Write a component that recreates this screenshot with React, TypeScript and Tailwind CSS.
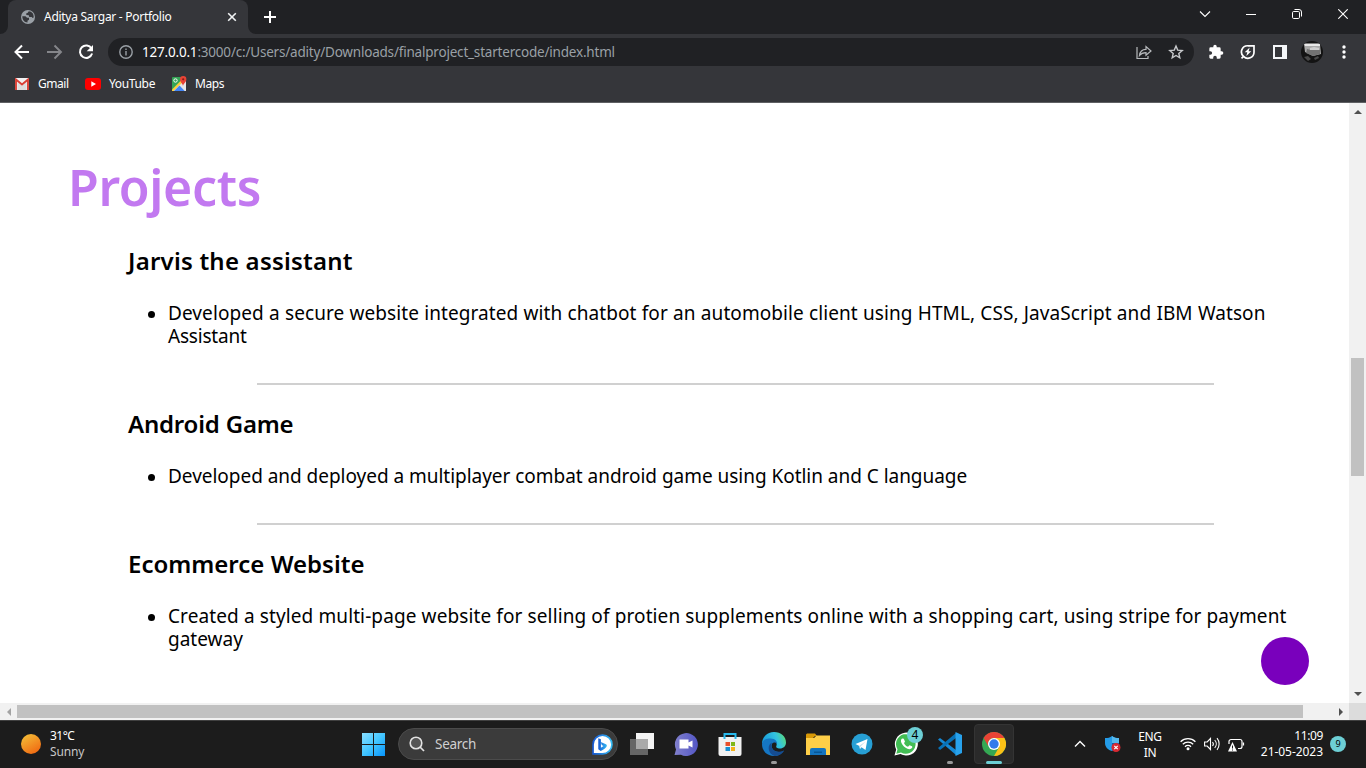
import type { ReactNode } from "react";

function Globe() {
  return (
    <svg width="14" height="14" viewBox="0 0 14 14">
      <circle cx="7" cy="7" r="7" fill="#9aa0a6" />
      <path d="M1.300 6.300 4.500 6.300 6 7.800H8v2l-1.500 1v1.800C3.500 12.400 1.300 10 1.300 6.300ZM7.800 1.300 6.500 3 5.300 3.300v1.700l2.500.3.500 1.600h2.500l.7 1.200 1.200-.6C12.900 4 11 1.500 7.800 1.300Z" fill="#35363a" />
    </svg>
  );
}

function GmailIcon() {
  return (
    <svg width="14" height="12" viewBox="0 0 14 12">
      <rect width="14" height="12" rx="1" fill="#f2f2f2" />
      <path d="M2.500 12V4L7 8l4.500-4v8z" fill="#dedede" />
      <path d="M1 12V1.500l6 5 6-5V12" fill="none" stroke="#d93f35" strokeWidth="1.900" />
    </svg>
  );
}

function MapsIcon() {
  return (
    <svg width="15" height="15" viewBox="0 0 15 15">
      <rect y="1" width="14" height="14" rx="1" fill="#35a456" />
      <path d="M0 15 13 2l1 1v12z" fill="#e7e7e7" />
      <path d="M0 13.500 12 1.500l1.500 2L1.500 15H0z" fill="#fbcf3b" />
      <path d="m7.500 9.500 5.200 5.500H2z" fill="#4285f4" />
      <circle cx="3.500" cy="4.500" r="1.700" fill="none" stroke="#fff" />
      <path d="M11 10C10.700 7.500 8 6.500 8 3.300a3.200 3.200 0 0 1 6.400 0C14.400 6.500 11.500 7.500 11 10Z" fill="#e94335" />
      <circle cx="11.200" cy="3.300" r="1.100" fill="#891c17" />
    </svg>
  );
}

function Chrome() {
  return (
    <div className="h-[103px] w-full bg-[#35363a] text-white font-['Noto_Sans',sans-serif]">
      <div className="flex h-[34px] bg-[#202124]">
        <div className="relative ml-2 flex h-[34px] w-60 items-center rounded-t-lg bg-[#35363a] pl-[13px] pr-[11px]">
          <svg className="absolute -left-2 bottom-0" width="8" height="8"><path d="M8 0v8H0a8 8 0 0 0 8-8Z" fill="#35363a" /></svg>
          <svg className="absolute -right-2 bottom-0" width="8" height="8"><path d="M0 0v8h8a8 8 0 0 1-8-8Z" fill="#35363a" /></svg>
          <Globe />
          <span className="ml-[9px] whitespace-nowrap text-[12px] tracking-[-0.280px]">Aditya Sargar - Portfolio</span>
          <svg className="ml-auto" width="10" height="10" viewBox="0 0 10 10"><path d="m1.200 1.200 7.600 7.600m0-7.600L1.200 8.800" stroke="#f1f3f4" strokeWidth="1.600" /></svg>
        </div>
        <div className="flex w-11 items-center justify-center">
          <svg width="12" height="12" viewBox="0 0 12 12"><path d="M6 0v12M0 6h12" stroke="#fff" strokeWidth="2" /></svg>
        </div>
        <div className="ml-auto flex h-[28px] items-center">
          <div className="flex w-[46px] justify-center"><svg width="12" height="12" viewBox="0 0 12 12"><path d="m1 3.500 5 5 5-5" fill="none" stroke="#fff" strokeWidth="1.100" /></svg></div>
          <div className="flex w-[46px] justify-center"><svg width="10" height="10"><path d="M0 5.500h10" stroke="#fff" /></svg></div>
          <div className="flex w-[46px] justify-center"><svg width="10" height="10" viewBox="0 0 10 10"><rect x=".5" y="2.500" width="7" height="7" rx="1.200" fill="none" stroke="#fff" /><path d="M2.500.500H7A2.500 2.500 0 0 1 9.500 3v4.500" fill="none" stroke="#fff" /></svg></div>
          <div className="flex w-[46px] justify-center"><svg width="10" height="10" viewBox="0 0 10 10"><path d="m.3.300 9.400 9.400m0-9.400L.3 9.700" stroke="#fff" strokeWidth="1.100" /></svg></div>
        </div>
      </div>
      <div className="flex h-9 items-center">
        <svg className="ml-[14px]" width="16" height="16" viewBox="0 0 16 16"><path d="M15 8H2M8 1.500 1.500 8 8 14.500" fill="none" stroke="#fff" strokeWidth="2" /></svg>
        <svg className="ml-[17px]" width="16" height="16" viewBox="0 0 16 16"><path d="M0 8h13M7.500 1.500 14 8l-6.500 6.500" fill="none" stroke="#85868a" strokeWidth="1.900" /></svg>
        <svg className="ml-[15px]" width="16" height="16" viewBox="0 0 16 16"><path d="M13.500 4.500A6.200 6.200 0 1 0 14.100 9.500" fill="none" stroke="#fff" strokeWidth="2" /><path d="M15 1v6.300H8.700z" fill="#fff" /></svg>
        <div className="ml-[14px] flex h-7 w-[1086px] items-center rounded-full bg-[#202124] pl-[11px] pr-[10px]">
          <svg width="14" height="14" viewBox="0 0 14 14"><circle cx="7" cy="7" r="6.200" fill="none" stroke="#9aa0a6" strokeWidth="1.400" /><path d="M7 6v4.500M7 3.500v1.500" stroke="#9aa0a6" strokeWidth="1.400" /></svg>
          <span className="ml-[9px] whitespace-nowrap pt-px text-[13.500px] tracking-[-0.200px] text-[#9aa0a6]"><span className="text-white">127.0.0.1</span>:3000/c:/Users/adity/Downloads/finalproject_startercode/index.html</span>
          <svg className="ml-auto mr-4" width="16" height="16" viewBox="0 0 16 16"><path d="M1 3v11.500h11V12M3.500 11.500C4 7 6.500 5.300 10 5.300V2.500L15 7l-5 4.300V8.600C7 8.600 5 9.500 3.500 11.500Z" fill="none" stroke="#b7babd" strokeWidth="1.200" /></svg>
          <svg width="16" height="16" viewBox="0 0 16 16"><path d="m8 2 1.700 4.100 4.500.4-3.400 2.900 1 4.400L8 11.500l-3.800 2.300 1-4.400-3.400-2.900 4.500-.4z" fill="none" stroke="#c8cacd" strokeWidth="1.400" /></svg>
        </div>
        <div className="ml-[6px] flex items-center">
          <div className="flex w-8 justify-center"><svg width="16" height="16" viewBox="0 0 24 24"><path fill="#fff" d="M20.500 11H19V7a2 2 0 0 0-2-2h-4V3.500a2.500 2.500 0 0 0-5 0V5H4a2 2 0 0 0-2 2v3.800h1.500a2.700 2.700 0 0 1 0 5.400H2V20c0 1.100.9 2 2 2h3.800v-1.500a2.700 2.700 0 0 1 5.400 0V22H17a2 2 0 0 0 2-2v-4h1.500a2.500 2.500 0 0 0 0-5z" /></svg></div>
          <div className="flex w-8 justify-center"><svg width="16" height="16" viewBox="0 0 16 16"><path d="M14 1.800H8.200A6.100 6.100 0 0 0 3.500 12.400 6.100 6.100 0 0 0 14 8ZM3.500 12.400l-2 2" fill="none" stroke="#fff" strokeWidth="1.700" /><path d="m9.700 3.500-5 4.700h2.600l-1 3.800 5-4.800H8.600z" fill="#fff" /></svg></div>
          <div className="flex w-8 justify-center"><svg width="14" height="14"><path fillRule="evenodd" d="M0 0h14v14H0zm2 2v10h7V2z" fill="#f4f6f9" /></svg></div>
          <div className="flex w-8 justify-center">
            <svg width="22" height="22" viewBox="0 0 22 22"><defs><clipPath id="avatar"><circle cx="11" cy="11" r="11" /></clipPath></defs><g clipPath="url(#avatar)"><path d="M0 0h22v22H0z" fill="#131313" /><path d="M3 3h16l1 10-8 2-8-4Z" fill="#a9a9a9" /><path d="M3 2.500h16V5H4z" fill="#e8e8e8" /><path d="m6 8 4 1 3-1 6 1v4l-7 2-7-3Z" fill="#727272" /><path d="m9 7 4-1 5 1v2H9z" fill="#cfcfcf" /><path d="m3 16 4-1 3 3-3 2Zm10 1 4-2 1 2-4 2Z" fill="#494949" /></g></svg>
          </div>
          <div className="flex w-8 justify-center"><svg width="4" height="14" viewBox="0 0 4 14"><g fill="#fff"><circle cx="2" cy="2" r="1.700" /><circle cx="2" cy="7" r="1.700" /><circle cx="2" cy="12" r="1.700" /></g></svg></div>
        </div>
      </div>
      <div className="flex h-[33px] items-center border-b border-[#5f6063] pb-[4px] pl-[15px] text-[12px]">
        <GmailIcon />
        <span className="ml-[9px] w-[32px] whitespace-nowrap tracking-[-0.450px]">Gmail</span>
        <svg className="ml-[15px]" width="16" height="12" viewBox="0 0 16 12"><rect width="16" height="12" rx="3" fill="#f00" /><path d="M6.300 3.300 11 6l-4.700 2.700z" fill="#fff" /></svg>
        <span className="ml-2 w-[47px] whitespace-nowrap tracking-[-0.350px]">YouTube</span>
        <div className="-mt-[2px] ml-4"><MapsIcon /></div>
        <span className="ml-2 tracking-[-0.400px]">Maps</span>
      </div>
    </div>
  );
}

function Project({ title, children }: { title: ReactNode; children: ReactNode }) {
  return (
    <article className="pl-[60px]">
      <h3 className="h-7 whitespace-nowrap text-[24px] font-semibold leading-7">{title}</h3>
      <ul className="mt-[27px] pl-10">
        <li className="relative whitespace-nowrap text-[19px] leading-[23px]">
          <span className="absolute -left-[20px] top-[9px] size-[7px] rounded-full bg-black" />
          {children}
        </li>
      </ul>
    </article>
  );
}

function Divider() {
  return <div className="mb-[25px] ml-[189px] mt-[35px] h-[2px] w-[957px] bg-[#d0d0d0]" />;
}

function Page() {
  return (
    <div className="flex h-[600px]">
      <main className="relative w-[1349px] overflow-hidden bg-white pl-[68px] pt-[55px] text-black font-['Noto_Sans',sans-serif]">
        <h1 className="mb-[31px] h-[58px] text-[50px] font-semibold leading-[58px] text-[#c279f0]"><span className="tracking-[-0.350px]">Projects</span></h1>
        <Project title={<span className="tracking-[0.220px]">Jarvis the assistant</span>}>
          <span className="tracking-[0.080px] [word-spacing:0.2px]">Developed a secure website integrated with chatbot for an automobile client using HTML, CSS, JavaScript and IBM Watson</span><br />
          <span className="tracking-[-0.200px]">Assistant</span>
        </Project>
        <Divider />
        <Project title={<span className="tracking-[-0.200px]">Android Game</span>}>
          <span className="tracking-[-0.030px]">Developed and deployed a multiplayer combat android game using Kotlin and C language</span>
        </Project>
        <Divider />
        <Project title="Ecommerce Website">
          <span className="tracking-[0.110px]">Created a styled multi-page website for selling of protien supplements online with a shopping cart, using stripe for payment</span><br />
          <span>gateway</span>
        </Project>
        <div className="absolute left-[1261px] top-[534px] size-12 rounded-full bg-[#7900bc]" />
      </main>
      <div className="flex w-[17px] flex-col items-center bg-[#f1f1f1]">
        <div className="flex h-[255px] pt-[7px]"><svg width="8" height="4"><path d="m0 4 4-4 4 4z" fill="#505050" /></svg></div>
        <div className="h-[118px] w-[13px] bg-[#c1c1c1]" />
        <div className="mb-[7px] mt-auto"><svg className="block" width="8" height="4"><path d="m0 0 4 4 4-4z" fill="#505050" /></svg></div>
      </div>
    </div>
  );
}

function EdgeIcon() {
  return (
    <svg width="24" height="24" viewBox="0 0 24 24">
      <defs><linearGradient id="edge" x1="0" x2="1" y1=".3" y2="0"><stop stopColor="#199ddb" /><stop offset=".55" stopColor="#33c3df" /><stop offset="1" stopColor="#62df63" /></linearGradient></defs>
      <path d="M0 12C0 5 5 0 12 0s12 4.500 12 10.500c0 3.800-2.700 6-6 6-3 0-4.500-1.200-3.500-3C15.500 11 13 7 9 7 5 7 1.500 9 0 12Z" fill="url(#edge)" />
      <path d="M0 12C1 7.500 4.500 6.500 8.500 6.500c4.500 0 7 3 6.500 5.500-1-2-4-2-5 0-1.500 4 2 8 7 8 2 0 3.500-.5 5-1.500C20 22 16 24 12 24 5 24 0 19 0 12Z" fill="#1576c4" />
      <path d="M10 10.500c-5 2-4.500 11 2.500 13.500 4 .2 7.500-2 9.500-5.500-5 2.500-10 1.500-12-2.500-1-2-.8-4 0-5.500Z" fill="#154c91" />
    </svg>
  );
}

function ChromeIcon() {
  return (
    <svg width="24" height="24" viewBox="0 0 24 24">
      <circle cx="12" cy="12" r="12" fill="#34a853" />
      <path d="M12 6h10.400A12 12 0 0 1 12 24l5.200-9z" fill="#fbc116" />
      <path d="M22.400 6H12a6 6 0 0 0-5.200 9L1.600 6a12 12 0 0 1 20.800 0Z" fill="#e94335" />
      <circle cx="12" cy="12" r="6" fill="#fff" /><circle cx="12" cy="12" r="4.700" fill="#327beb" />
    </svg>
  );
}

function TaskIcon({ children, mark }: { children: ReactNode; mark?: boolean }) {
  return (
    <div className="relative flex h-10 w-11 items-center justify-center">
      {children}
      {mark && <span className="absolute bottom-0 h-[3px] w-[6px] rounded-full bg-[#999]" />}
    </div>
  );
}

function Taskbar() {
  return (
    <div className="flex h-12 items-center border-t border-[#404040] bg-[#1c1c1c] pb-px text-white font-['Noto_Sans',sans-serif]">
      <div className="flex w-[361px] items-center pl-[21px]">
        <svg width="20" height="20"><defs><linearGradient id="sun" x1=".2" x2=".8" y1="0" y2="1"><stop stopColor="#f4bd37" /><stop offset="1" stopColor="#f06510" /></linearGradient></defs><circle cx="10" cy="10" r="10" fill="url(#sun)" /></svg>
        <div className="ml-[9px] text-[12px] leading-4"><div className="tracking-[-0.500px]">31°C</div><div className="tracking-[-0.150px] text-[#c7c7c7]">Sunny</div></div>
      </div>
      <svg width="24" height="24" viewBox="0 0 24 24"><defs><linearGradient id="win" x1="0" x2="1" y1="0" y2="1"><stop stopColor="#88deff" /><stop offset=".5" stopColor="#42c5ff" /><stop offset="1" stopColor="#0794fb" /></linearGradient></defs><path d="M1 1h11v11H1zm12 0h11v11H13zM1 13h11v11H1zm12 0h11v11H13z" fill="url(#win)" /></svg>
      <div className="ml-[13px] flex h-8 w-[220px] items-center rounded-full border border-[#4b4b4b] bg-[#3b3b3b] pl-[10px] pr-[4px]">
        <svg width="16" height="16" viewBox="0 0 16 16"><circle cx="7" cy="7" r="5.800" fill="#555" stroke="#e2e2e2" strokeWidth="1.600" /><path d="m11 11 4 4" stroke="#e2e2e2" strokeWidth="1.700" /></svg>
        <span className="ml-[10px] text-[13.500px] tracking-[-0.280px] text-[#d0d0d0]">Search</span>
        <svg className="ml-auto" width="21" height="21" viewBox="0 0 20 20"><defs><linearGradient id="bing"><stop stopColor="#1759d3" /><stop offset="1" stopColor="#34baf2" /></linearGradient></defs><path d="M1 19V10a9 9 0 1 1 9 9z" fill="#fff" stroke="url(#bing)" strokeWidth="1.600" /><path d="m6 4 2.500 1v8l2.500-1.500-1.700-1-1-2.800 5 2.100c2 1.500.5 3.500-5 6.500L6 14.500Z" fill="url(#bing)" /></svg>
      </div>
      <div className="ml-[2px] flex">
        <TaskIcon><svg width="24" height="24" viewBox="1 0 24 24"><path d="M7 1h18v16H7z" fill="#f4f4f4" /><path d="M1 7h18v16H1z" fill="#666" /><path d="M7 7h12v10H7z" fill="#aaa" /></svg></TaskIcon>
        <TaskIcon><svg width="24" height="24" viewBox="0 0 24 24"><defs><linearGradient id="meet" x1="0" x2="1"><stop stopColor="#8180cc" /><stop offset="1" stopColor="#5356c5" /></linearGradient></defs><path d="M.5 23 2 17.500A11.500 11.500 0 1 1 7 22.700Z" fill="url(#meet)" /><path d="M5.500 7.500h9v3l4-2v7l-4-2v3h-9z" fill="#fff" /></svg></TaskIcon>
        <TaskIcon><svg width="24" height="24" viewBox="0 0 24 24"><path d="M.5 5h23v17a2 2 0 0 1-2 2h-19a2 2 0 0 1-2-2z" fill="#f1f1f1" /><path d="M6.500 7V2h11v5" fill="none" stroke="#27b9ed" strokeWidth="2" /><path d="M7.500 10H12v4H7.500z" fill="#e9502b" /><path d="M13 10h4v4h-4z" fill="#7fb719" /><path d="M7.500 15H12v4H7.500z" fill="#168fd2" /><path d="M13 15h4v4h-4z" fill="#f5b21b" /></svg></TaskIcon>
        <TaskIcon mark><EdgeIcon /></TaskIcon>
        <TaskIcon><svg width="24" height="24" viewBox="0 0 24 24"><path d="M0 2.500 1 1.500h8l2 2.500h-2L7 6H0z" fill="#d99907" /><path d="M0 6h8l2.500-2.500H24V23H0z" fill="#ffcf48" /><path d="M4 23v-5a2 2 0 0 1 2-2h12a2 2 0 0 1 2 2v5z" fill="#1474bf" /><path d="M8 19.500h8v1.500H8z" fill="#075797" /></svg></TaskIcon>
        <TaskIcon><svg width="22" height="22" viewBox="0 0 22 22"><circle cx="11" cy="11" r="10.500" fill="#279fd4" /><path d="m4.500 11 12-5-2 11-4-2.800L9 16l-.6-3Z" fill="#fff" /><path d="m8.300 12.700 6.300-4.200-5 5L9 16Z" fill="#c5dfec" /></svg></TaskIcon>
        <TaskIcon>
          <svg width="24" height="24" viewBox="0 0 24 24"><path d="m.5 23.500 1.700-6A11.500 11.500 0 1 1 6.500 22Z" fill="#fff" /><path d="m2.300 21.700 1.200-4.500A9.800 9.800 0 1 1 7 20.500Z" fill="#42bd54" /><path d="M8 6.500c-4 3 4 12.500 9 10.300 1.500-.8 1.500-2 1-2.500l-2.500-1-1.500 1.500c-2-.7-3.300-2-4-3.800l1-1.300-1.200-2.900Z" fill="#fff" /></svg>
          <span className="absolute left-[23px] top-[3px] flex size-4 items-center justify-center rounded-full bg-[#6dcfd5] text-[12px] leading-4 text-black">4</span>
        </TaskIcon>
        <TaskIcon mark><svg width="24" height="24" viewBox="0 0 24 24"><path d="m0 7.500 2-1.500 16 12v5z" fill="#168ad6" /><path d="m0 16 18-15v5L2 18z" fill="#0872b7" /><path d="m17.500 0 6.500 3v18l-6.500 3z" fill="#28a2ec" /></svg></TaskIcon>
        <div className="relative ml-[2px] flex size-10 items-center justify-center rounded-[4px] border border-[#343434] bg-[#2a2a2a]">
          <ChromeIcon />
          <span className="absolute -bottom-px h-[3px] w-4 rounded-full bg-[#6dcfd5]" />
        </div>
      </div>
      <div className="ml-auto flex items-center pr-5">
        <svg width="12" height="8" viewBox="0 0 12 8"><path d="m1 6.500 5-5 5 5" fill="none" stroke="#fff" strokeWidth="1.400" /></svg>
        <svg className="ml-[19px]" width="16" height="16" viewBox="0 0 16 16"><path d="M7 0c2 1.700 4 2 7 2v5c0 4-3 7-7 8-4-1-7-4-7-8V2c3 0 5-.3 7-2Z" fill="#249be7" /><path d="M7 0c2 1.700 4 2 7 2v5H7z" fill="#54b8ec" /><path d="M7 7h7c0 4-3 7-7 8z" fill="#0761af" /><circle cx="11" cy="11.500" r="4.500" fill="#d62932" /><path d="m9.300 9.800 3.400 3.400m0-3.400-3.400 3.400" stroke="#fff" strokeWidth="1.200" /></svg>
        <div className="ml-[15px] w-7 whitespace-nowrap pt-px text-center text-[12px] leading-4 tracking-[-0.400px]">ENG<br />IN</div>
        <svg className="ml-[16px]" width="16" height="14" viewBox="0 0 16 14"><g fill="none" stroke="#fff" strokeWidth="1.300"><path d="M.6 4.700a10.400 10.400 0 0 1 14.800 0M2.800 7.300a7.300 7.300 0 0 1 10.400 0M5 9.700a4.200 4.200 0 0 1 6 0" /></g><circle cx="8" cy="11.700" r="1.500" fill="#fff" /></svg>
        <svg className="ml-2" width="17" height="14" viewBox="0 0 17 14"><g fill="none" stroke="#fff" strokeWidth="1.100"><path d="M.6 5h2.600l3.300-3.500v11L3.200 9H.6zM8.500 5a3 3 0 0 1 0 4M10.700 3a6 6 0 0 1 0 8M13 1.200a9 9 0 0 1 0 11.600" /></g></svg>
        <svg className="ml-[7px]" width="17" height="15" viewBox="0 0 17 15"><path d="M1 7V4.500a2 2 0 0 1 2-2h9a2 2 0 0 1 2 2v5a2 2 0 0 1-2 2h-2M15.500 5.500v3" fill="none" stroke="#fff" strokeWidth="1.200" /><path d="m4.500 5 4.500 9.500H0z" fill="#fff" /><path d="M4.500 8.500v3m0 1v1" stroke="#1c1c1c" /></svg>
        <div className="ml-[14px] w-[64px] whitespace-nowrap text-right text-[12px] leading-4"><div className="tracking-[-0.400px]">11:09</div><div className="tracking-[-0.050px]">21-05-2023</div></div>
        <span className="ml-[7px] flex size-4 items-center justify-center rounded-full bg-[#6dcfd5] text-[9px] text-black">9</span>
      </div>
    </div>
  );
}

export default function App() {
  return (
    <div className="flex h-[768px] w-[1366px] flex-col overflow-hidden bg-[#1c1c1c]">
      <Chrome />
      <Page />
      <div className="flex h-[17px] bg-[#f1f1f1]">
        <div className="flex w-[17px] items-center justify-center"><svg width="4" height="8"><path d="M4 0 0 4l4 4z" fill="#a3a3a3" /></svg></div>
        <div className="mt-[2px] h-[13px] w-[1286px] bg-[#c1c1c1]" />
        <div className="ml-auto flex w-[17px] items-center justify-center"><svg width="4" height="8"><path d="m0 0 4 4-4 4z" fill="#505050" /></svg></div>
        <div className="w-[17px] bg-[#dcdcdc]" />
      </div>
      <Taskbar />
    </div>
  );
}
